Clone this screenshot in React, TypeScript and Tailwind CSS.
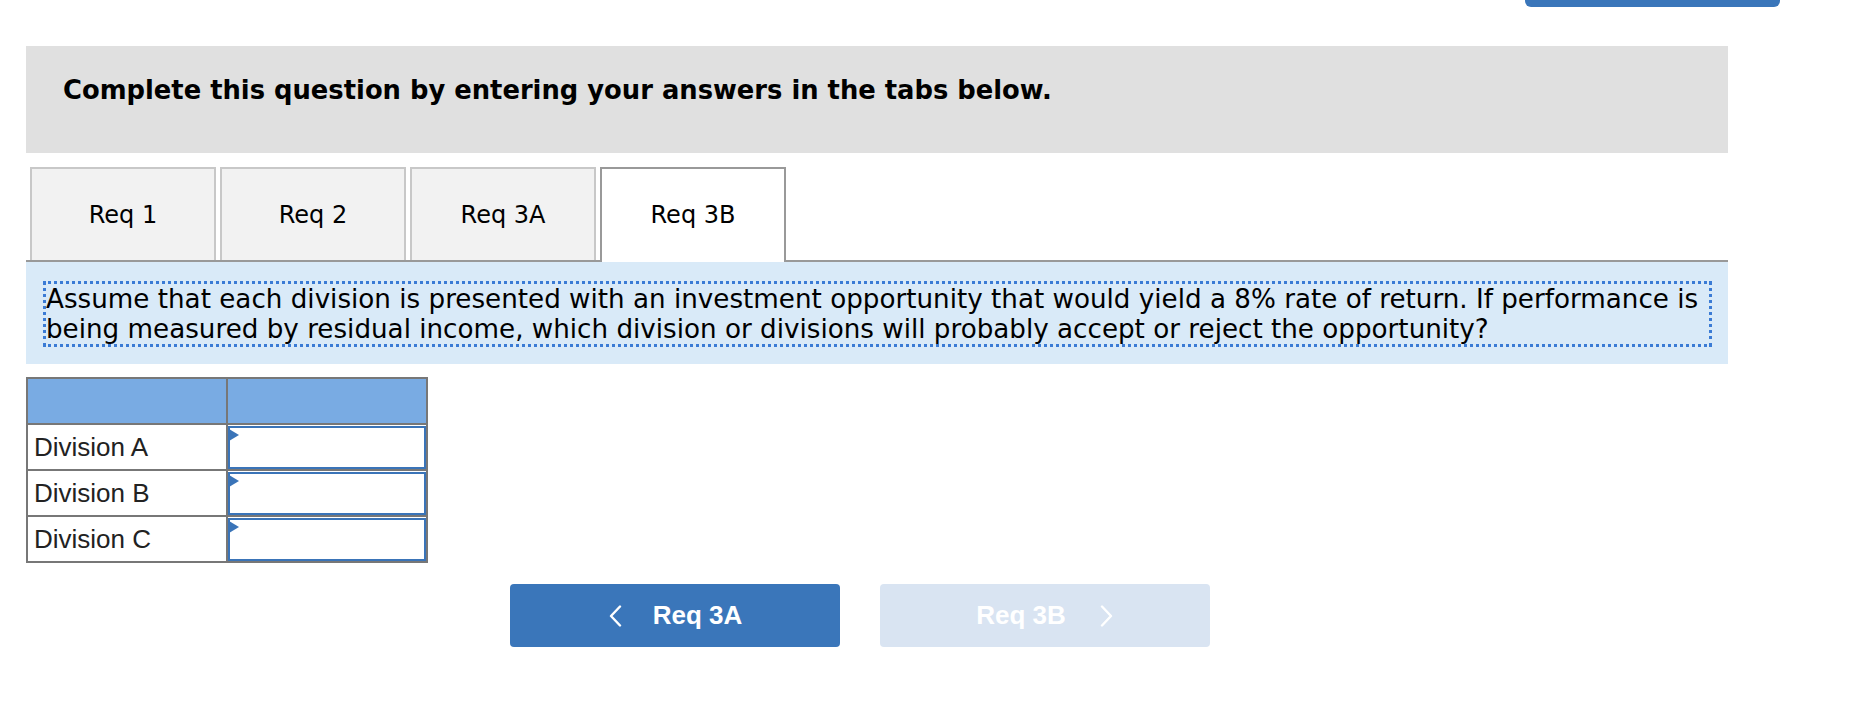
import React from 'react';

const tabs = ['Req 1', 'Req 2', 'Req 3A', 'Req 3B'];
const rows = ['Division A', 'Division B', 'Division C'];

function Chevron({ dir }: { dir: 'left' | 'right' }) {
    return (
        <svg width="15" height="22" viewBox="0 0 15 22" fill="none" stroke="currentColor" strokeWidth="2.4" strokeLinecap="round" strokeLinejoin="round">
            {dir === 'left' ? <polyline points="12,1.5 3,11 12,20.5" /> : <polyline points="3,1.5 12,11 3,20.5" />}
        </svg>
    );
}

export default function App() {
    const active = 3;

    return (
        <div className="w-[1852px] h-[712px] bg-white font-['DejaVu_Sans',Verdana,sans-serif] text-black">
            {/* partially visible button at the top */}
            <div className="h-[7px]">
                <div className="ml-[1525px] w-[255px] h-[7px] bg-[#3a76ba] rounded-b-[6px]" />
            </div>

            <div className="ml-[26px] w-[1702px]">
                <div className="mt-[39px] h-[107px] bg-[#e0e0e0] pl-[37px] pt-[29px]">
                    <h2 className="text-[25.8px] leading-[30px] font-bold">Complete this question by entering your answers in the tabs below.</h2>
                </div>

                {/* tabs */}
                <div className="mt-[14px] flex gap-[4px] pl-[4px] border-b-2 border-[#999999] h-[95px]">
                    {tabs.map((t, i) =>
                        i === active ? (
                            <div
                                key={t}
                                className="w-[186px] h-[95px] bg-white border-2 border-b-0 border-[#999999] flex items-center justify-center text-[24px] relative z-10"
                            >
                                <span className="-mt-[2px]">{t}</span>
                            </div>
                        ) : (
                            <div
                                key={t}
                                className="w-[186px] h-[93px] bg-[#f2f2f2] border-2 border-b-0 border-[#c8c8c8] flex items-center justify-center text-[24px]"
                            >
                                {t}
                            </div>
                        )
                    )}
                </div>

                {/* question band */}
                <div className="h-[102px] bg-[#d9eaf8] pt-[19px] pl-[17px]">
                    <div className="w-[1669px] h-[66px] border-[3px] border-dotted border-[#3a7bd5] text-[26.2px] leading-[30px] whitespace-nowrap">
                        Assume that each division is presented with an investment opportunity that would yield a 8% rate of return. If performance is
                        <br />
                        being measured by residual income, which division or divisions will probably accept or reject the opportunity?
                    </div>
                </div>

                {/* answer table */}
                <table className="mt-[13px] border-collapse w-[402px] font-['Liberation_Sans',Arial,sans-serif] text-[26px] text-[#222222]">
                    <thead>
                        <tr className="h-[46px] bg-[#79abe3]">
                            <th className="border-2 border-[#777777] w-[201px]" />
                            <th className="border-2 border-[#777777] w-[201px]" />
                        </tr>
                    </thead>
                    <tbody>
                        {rows.map((r) => (
                            <tr key={r} className="h-[46px]">
                                <td className="border-2 border-[#777777] pl-[6px] leading-none">{r}</td>
                                <td className="border-2 border-[#777777] p-0">
                                    <div className="relative h-[43px] border-2 border-[#3a74b8] bg-white">
                                        <div className="absolute -left-[1px] top-[1px] w-0 h-0 border-y-[6px] border-y-transparent border-l-[10px] border-l-[#3a74b8]" />
                                    </div>
                                </td>
                            </tr>
                        ))}
                    </tbody>
                </table>

                {/* navigation buttons */}
                <div className="mt-[21px] ml-[484px] flex gap-[40px] font-['Liberation_Sans',Arial,sans-serif] font-bold text-[26px] text-white">
                    <button className="w-[330px] h-[63px] rounded-[4px] bg-[#3a76ba] flex items-center justify-center gap-[30px]">
                        <Chevron dir="left" />
                        <span>Req 3A</span>
                    </button>
                    <button className="w-[330px] h-[63px] rounded-[4px] bg-[#d9e4f2] flex items-center justify-center gap-[33px]">
                        <span>Req 3B</span>
                        <Chevron dir="right" />
                    </button>
                </div>
            </div>
        </div>
    );
}
